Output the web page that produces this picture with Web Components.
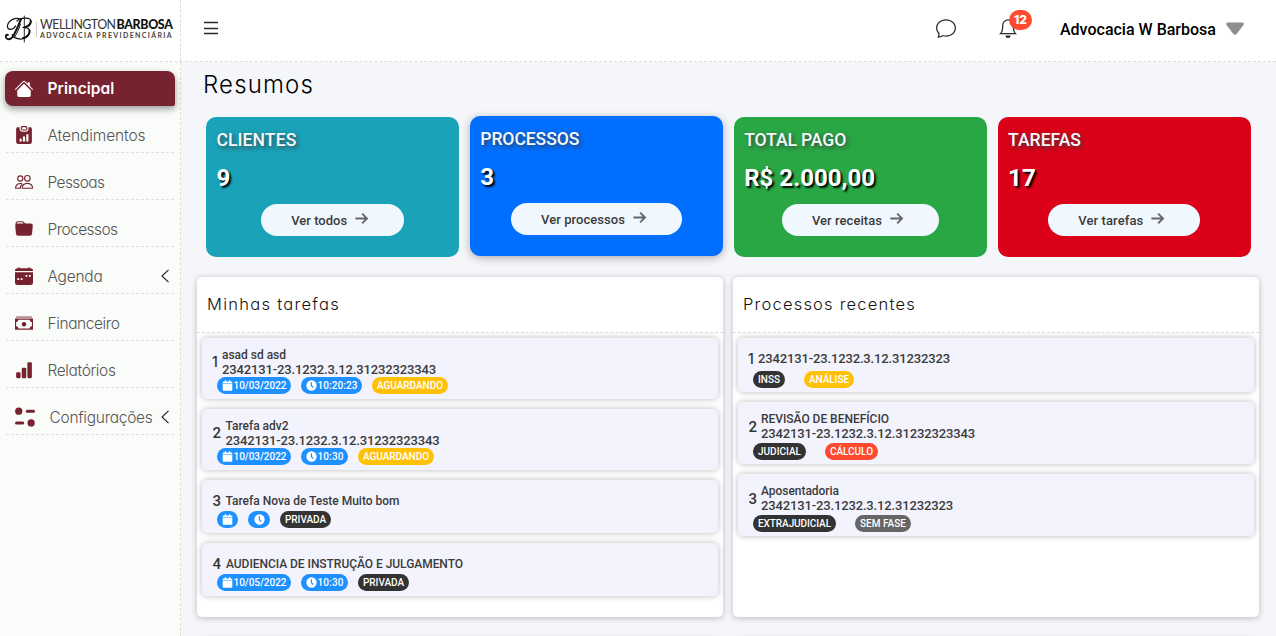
<!DOCTYPE html>
<html lang="pt-BR">
<head>
<meta charset="utf-8">
<title>Resumos</title>
<style>
html,body{margin:0;height:100%;overflow:hidden}
body{font-family:Roboto,"Liberation Sans",sans-serif;color:#000;background:#f4f6fa}
</style>
</head>
<body>
<app-shell></app-shell>
<script>
const GEO = 'Inter,"Open Sans",sans-serif';
const icons = {
  house:'<path d="M8 3.300l6 6V13.500A1.500 1.500 0 0 1 12.500 15h-9A1.500 1.500 0 0 1 2 13.500V9.300z"/><path d="M.4 8.300L7.300 1.400a1 1 0 0 1 1.400 0L15.600 8.300" fill="none" stroke="currentColor" stroke-width=".9" stroke-linecap="round"/><path d="M11.200 2h1.900v4l-1.900-1.900z"/>',
  clipdata:'<path fill-rule="evenodd" d="M6.500 0A1.500 1.500 0 0 0 5 1.500v1A1.500 1.500 0 0 0 6.500 4h3A1.500 1.500 0 0 0 11 2.500v-1A1.500 1.500 0 0 0 9.500 0zm0 1h3a.5.5 0 0 1 .5.5v1a.5.5 0 0 1-.5.5h-3a.5.5 0 0 1-.5-.5v-1a.5.5 0 0 1 .5-.5z"/><path fill-rule="evenodd" d="M4 1H3a2 2 0 0 0-2 2.500V14a2 2 0 0 0 2 2h10a2 2 0 0 0 2-2V3.500A2 2 0 0 0 13 1h-1v1.500A2.500 2.500 0 0 1 9.500 5h-3A2.500 2.500 0 0 1 4 2.500zM10 8a1 1 0 1 1 2 0v5a1 1 0 1 1-2 0zm-6 4a1 1 0 1 1 2 0v1a1 1 0 1 1-2 0zm4-3a1 1 0 0 1 1 1v3a1 1 0 1 1-2 0v-3a1 1 0 0 1 1-1z"/>',
  people:'<g fill="none" stroke="currentColor" stroke-width="1"><circle cx="11" cy="4.700" r="2.500"/><circle cx="4.700" cy="4.900" r="2.300"/><path d="M6.500 13.500c-.3-2.400 1.500-4.300 4.500-4.300s4.800 1.900 4.500 4.300z"/><path d="M6.600 9.500C3 8.700.5 10.500.5 13.500h4.200c0-1.700.7-2.900 1.900-3.800"/></g>',
  folder:'<path fill-rule="evenodd" d="M9.828 3h3.982a2 2 0 0 1 1.992 2.181l-.637 7A2 2 0 0 1 13.174 14H2.825a2 2 0 0 1-1.991-1.819l-.637-7a2 2 0 0 1 .342-1.310L.5 3a2 2 0 0 1 2-2h3.672a2 2 0 0 1 1.414.586l.828.828A2 2 0 0 0 9.828 3zm-8.322.120C1.720 3.042 1.950 3 2.190 3h5.396l-.707-.707A1 1 0 0 0 6.172 2H2.500a1 1 0 0 0-1 .981z"/>',
  calendar:'<path d="M4 .5a.5.5 0 0 0-1 0V1H2a2 2 0 0 0-2 2v.600h16V3a2 2 0 0 0-2-2h-1V.5a.5.5 0 0 0-1 0V1H4z"/><path fill-rule="evenodd" d="M0 4.600h16V14a2 2 0 0 1-2 2H2a2 2 0 0 1-2-2zm9.300 2.400v1.600H11V7zm3 0v1.600H14V7zM2 10v1.600h1.700V10zm3 0v1.600h1.700V10z"/>',
  cash:'<path d="M1 2.700h14" stroke="currentColor" stroke-width="1.200" opacity=".65"/><path fill-rule="evenodd" d="M0 4h16v10H0zM3 5.200a2 2 0 0 1-2 2v3.600a2 2 0 0 1 2 2h10a2 2 0 0 1 2-2V7.200a2 2 0 0 1-2-2z"/><circle cx="8" cy="9" r="2"/>',
  bars:'<rect x="1" y="10" width="4" height="5.300" rx="1"/><rect x="6" y="6" width="4" height="9.300" rx="1"/><rect x="11" y="1" width="4" height="14.300" rx="1"/>',
  left:'<path d="M11.500 1.800L5 8l6.500 6.200" fill="none" stroke="currentColor" stroke-width="1.150"/>',
  toggles:'<circle cx="3" cy="3.300" r="2.900"/><rect x="8.600" y="2.100" width="7.400" height="2.400" rx="1.200"/><circle cx="12.900" cy="12.700" r="2.900"/><rect x="0" y="11.500" width="7.400" height="2.400" rx="1.200"/>',
  menu:'<path d="M1 2.500h14M1 8.500h14M1 13.500h14" fill="none" stroke="currentColor" stroke-width="1.300"/>',
  chat:'<path d="M2.678 11.894a1 1 0 0 1 .287.801 10.970 10.970 0 0 1-.398 2c1.395-.323 2.247-.697 2.634-.893a1 1 0 0 1 .710-.074A8.060 8.060 0 0 0 8 14c3.996 0 7-2.807 7-6 0-3.192-3.004-6-7-6S1 4.808 1 8c0 1.468.617 2.830 1.678 3.894zm-.493 3.905a21.700 21.700 0 0 1-.713.129c-.2.032-.352-.176-.273-.362a9.700 9.700 0 0 0 .244-.637l.003-.010c.248-.720.450-1.548.524-2.319C.743 11.370 0 9.760 0 8c0-3.866 3.582-7 8-7s8 3.134 8 7-3.582 7-8 7a9.060 9.060 0 0 1-2.347-.306c-.520.263-1.639.742-3.468 1.105z"/>',
  bell:'<path d="M8 16a2 2 0 0 0 2-2H6a2 2 0 0 0 2 2z"/><path d="M8 1.400C5.300 1.900 3.800 3.700 3.800 6c0 2.800-.5 5.200-1.800 6.500h12c-1.300-1.300-1.800-3.700-1.800-6.500 0-2.300-1.500-4.100-4.200-4.600z" fill="none" stroke="currentColor" stroke-width="1"/>',
  caret:'<path d="M1.600 2.200h12.800c1.500 0 1.900 1.300 1 2.400L9.600 12.200c-.9 1.100-2.300 1.100-3.200 0L.6 4.600c-.9-1.100-.5-2.400 1-2.400z"/>',
  arrow:'<path d="M.5 8h14M8.800 2L14.800 8l-6 6" fill="none" stroke="currentColor" stroke-width="2.300"/>',
  day:'<path d="M1 5.400h14V14A1.800 1.800 0 0 1 13.200 15.800H2.800A1.800 1.800 0 0 1 1 14zM1 4.600V3.400A1.400 1.400 0 0 1 2.400 2H4V.3h2V2h4V.3h2V2h1.600A1.400 1.400 0 0 1 15 3.400v1.200z"/>',
  clock:'<path fill-rule="evenodd" d="M8 .5a7.500 7.500 0 1 0 0 15A7.500 7.500 0 0 0 8 .5zM7 3.300h1.700v4.500l2.400 2.600-1.200 1.200L7 8.600z"/>'
};
const esc = s => s.replace(/&/g,'&amp;').replace(/</g,'&lt;');
class Base extends HTMLElement{
  connectedCallback(){
    if(this.shadowRoot) return;
    this.attachShadow({mode:'open'}).innerHTML = this.view();
  }
  a(n){return this.getAttribute(n)||''}
}
class UiIcon extends Base{
  view(){const s=this.a('size')||16;
    return `<style>:host{display:block;flex:none;width:${s}px;height:${s}px}svg{display:block;overflow:visible}</style><svg width="${s}" height="${s}" viewBox="0 0 16 16" fill="currentColor">${icons[this.a('name')]}</svg>`}
}
class BrandLogo extends Base{
  view(){return `<style>
  :host{display:flex;align-items:center;height:28px;gap:3px;color:#111}
  .mark{flex:none;display:block}
  .words{border-left:1px solid #ccc;padding-left:3px;height:15px;display:flex;flex-direction:column;justify-content:center;font-family:Lato,sans-serif}
  .top{display:flex;font-size:12.400px;line-height:12px;color:#333;gap:1px}
  .top b{font-weight:900;color:#111}
  .sub{font-size:7px;line-height:8px;color:#444;font-weight:700}
  .top,.sub{flex:none}
  </style>
  <svg class="mark" width="28" height="28" viewBox="0 0 28 28" fill="none" stroke="currentColor" stroke-linecap="round">
  <path d="M16 4C13.500 10 11 17 7.500 22 5.500 25 2 25 1 22.500c-.6-1.700.5-3 1.800-2.600" stroke-width="2"/>
  <path d="M14 3.500C7 2.500 2 7.500 2.500 12c.5 3.500 6 3 8-1" stroke-width="1.200"/>
  <path d="M12 6c3-3 13.500-4.500 14 .2.300 3.500-4 6-8.500 6.300 5-.3 7.700 1.600 7.200 4.700-.8 5-7 7.800-12 6.500-3-.8-5-2.200-5.500-4.200" stroke-width="1.200"/>
  <path d="M25.700 6c.3 3-2.500 5.200-5.500 6.200M24.500 15.500c.6 3.500-2.800 6.800-6.500 7.800" stroke-width="2"/>
  <path d="M15.500 9C13.500 15 12 19 9.500 22" stroke-width="1"/>
  <path d="M19.300 1v26" stroke-width=".9"/></svg>
  <div class="words"><div class="top"><fit-text w="75.500">WELLINGTON</fit-text><b><fit-text w="56">BARBOSA</fit-text></b></div>
  <div class="sub"><fit-text w="133">ADVOCACIA PREVIDENCIÁRIA</fit-text></div></div>`}
}
class NavItem extends Base{
  view(){
    return `<style>:host{display:flex;box-sizing:border-box;height:35px;margin:0 1px 12px;padding:0 1px 0 9px;align-items:center;border-bottom:1px dashed #dfdfdf;color:#77222f;font:300 15.500px ${GEO};font-feature-settings:"cv11"}
    :host([active]){margin:0 0 12px;padding:0 10px;background:#77222f;color:#fff;border:0;border-radius:8px 8px 2px 8px;box-shadow:0 3px 7px rgba(0,0,0,.4);font-weight:600}
    .l{flex:1;margin-left:14.500px;color:#555;padding-top:1px}
    :host([active]) .l{color:#fff;padding:0}
    .c{color:#222}</style>
    <ui-icon name="${this.a('icon')}" size="${this.a('isize')||18}"></ui-icon><div class="l"><fit-text w="${this.a('w')}">${esc(this.a('label'))}</fit-text></div>${this.hasAttribute('sub')?'<ui-icon class="c" name="left" size="16"></ui-icon>':''}`}
}
class SideBar extends Base{
  view(){return `<style>:host{display:block;box-sizing:border-box;background:#fafcf9;border-right:1px dashed #dcdcdc;padding:9px 5px 0}</style><slot></slot>`}
}
class TopBar extends Base{
  view(){return `<style>:host{display:flex;box-sizing:border-box;height:62px;background:#fff;border-bottom:1px dashed #dcdcdc}
  .brand{box-sizing:border-box;width:181px;border-right:1px dashed #dcdcdc;padding:15px 0 0 5px}
  .bar{flex:1;display:flex;align-items:center;padding:0 32px 5px 22px;color:#222b35}
  .sp{flex:1}.bell{position:relative;margin:0 42px 0 42px}
  .n{position:absolute;left:11px;top:-8px;box-sizing:border-box;width:23px;height:20px;border-radius:10px;background:#ff4a2f;color:#fff;font:800 12px/20px ${GEO};display:flex;justify-content:center}
  .user{font:500 16px/20px Roboto,sans-serif;color:#000;margin-right:10px;padding-top:3px}
  .car{color:#8e8e8e;padding-top:1px}</style>
  <div class="brand"><brand-logo></brand-logo></div>
  <div class="bar"><ui-icon name="menu" size="16"></ui-icon><div class="sp"></div><ui-icon name="chat" size="20"></ui-icon>
  <div class="bell"><ui-icon name="bell" size="20"></ui-icon><div class="n"><fit-text w="13">12</fit-text></div></div>
  <div class="user"><fit-text w="156">Advocacia W Barbosa</fit-text></div><ui-icon class="car" name="caret" size="18"></ui-icon></div>`}
}
class SummaryCard extends Base{
  view(){return `<style>:host{display:block;box-sizing:border-box;height:140px;border-radius:10px;background:${this.a('color')};padding:12px 10.400px 0;color:#fff}
  :host([raised]){transform:translateY(-1px);box-shadow:0 2px 8px rgba(0,0,0,.3)}
  .t{font:500 17.600px/23px Roboto,sans-serif;color:#f3f8fa;text-shadow:2px 2px 4px rgba(60,60,60,.9)}
  .v{font:700 24px/28px Roboto,sans-serif;margin-top:12px;text-shadow:2px 2px 2px #000}
  .b{display:flex;align-items:center;box-sizing:border-box;width:${this.a('bw')}px;height:32px;border-radius:16px;background:#f0f7ff;margin:12px auto 0;padding:1px 0 0 30px;font:500 13px/16px Roboto,sans-serif;color:#3c3c3c;gap:8px}
  ui-icon{color:#666;margin-bottom:4px}</style>
  <div class="t"><fit-text w="${this.a('tw')}">${this.a('title')}</fit-text></div><div class="v"><fit-text w="${this.a('vw')}">${this.a('value')}</fit-text></div>
  <div class="b"><fit-text w="${this.a('lw')}">${this.a('link')}</fit-text><ui-icon name="arrow" size="13"></ui-icon></div>`}
}
class DataPanel extends Base{
  view(){return `<style>:host{display:block;box-sizing:border-box;height:340px;background:#fff;border-radius:5px;box-shadow:0 1px 6px rgba(0,0,0,.24)}
  .h{box-sizing:border-box;height:56px;border-bottom:1px dashed #dcdcdc;padding:0 10px 2px;display:flex;align-items:center;font:300 16.500px/20px ${GEO};font-feature-settings:"cv11";color:#111}
  .c{padding:5px 5px 0;display:grid;gap:10px}</style><div class="h"><fit-text w="${this.a('w')}">${this.a('title')}</fit-text></div><div class="c"><slot></slot></div>`}
}
class PillBadge extends Base{
  view(){const c={blue:'#1e90ff',amber:'#ffc107',dark:'#333',red:'#ff4a2f',gray:'#666'}[this.a('tone')];
  return `<style>:host{display:flex;box-sizing:border-box;width:${this.a('w')}px;height:17px;border-radius:9px;background:${c};color:#fff;align-items:center;justify-content:center;gap:1px;font:500 10px/17px Roboto,sans-serif}ui-icon{margin-bottom:1px}</style>${this.a('icon')?`<ui-icon name="${this.a('icon')}" size="11"></ui-icon>`:''}${this.a('text')?`<fit-text w="${this.a('w')-(this.a('icon')?21:10)}">${this.a('text')}</fit-text>`:''}`}
}
class RecordRow extends Base{
  view(){return `<style>:host{display:block;box-sizing:border-box;height:${this.a('h')}px;border-radius:5px;background:#f3f3fe;box-shadow:0 0 6px rgba(0,0,0,.28);padding-left:10.500px;color:#3b3b3b}
  .top{display:flex;align-items:center;box-sizing:border-box;height:${this.a('head')}px;padding-top:${this.a('pt')}px}
  .n{font:500 15px/16px Roboto,sans-serif;width:${this.a('nw')}px;flex:none;color:#333;padding-top:1px}
  .n.one{font:500 14px/16px ${GEO};text-indent:-.5px;padding:0}
  .x{font:500 12px/14px Roboto,sans-serif}.x .k{font-size:13px}.x div+.k{padding-top:1px;margin-bottom:-1px}
  .b{display:flex;gap:${this.a('gap')}px;padding-left:4.500px}</style>
  <div class="top"><div class="n${this.a('n')==='1'?' one':''}">${this.a('n')}</div><div class="x">${this.a('l1')?`<div><fit-text w="${this.a('w1')}">${this.a('l1')}</fit-text></div>`:''}${this.a('l2')?`<div class="k"><fit-text w="${this.a('w2')}">${this.a('l2')}</fit-text></div>`:''}</div></div><div class="b"><slot></slot></div>`}
}
class AppShell extends Base{
  view(){
  const C='2342131-23.1232.3.12.31232323';
  return `<style>:host{display:grid;grid-template:62px 574px/181px 1fr;height:636px;overflow:hidden}
  top-bar{grid-column:1/3}
  main{padding:8px 17px 0 16px;min-width:0;overflow:hidden}
  h1{box-sizing:border-box;margin:0 6px;font:300 24px/30px ${GEO};color:#000;height:47px;font-feature-settings:"cv11"}
  .cards{display:grid;grid-template-columns:repeat(4,1fr);gap:10.500px;margin:0 8px 20px 9px}
  .panels{display:grid;grid-template-columns:1fr 1fr;gap:10px;row-gap:22px}</style>
  <top-bar></top-bar>
  <side-bar>
  <nav-item active icon="house" label="Principal" w="67"></nav-item>
  <nav-item icon="clipdata" label="Atendimentos" w="98"></nav-item>
  <nav-item icon="people" label="Pessoas" w="57"></nav-item>
  <nav-item icon="folder" label="Processos" w="70"></nav-item>
  <nav-item sub icon="calendar" label="Agenda" w="55"></nav-item>
  <nav-item icon="cash" label="Financeiro" w="72"></nav-item>
  <nav-item icon="bars" label="Relatórios" w="68"></nav-item>
  <nav-item sub icon="toggles" isize="20" label="Configurações" w="103"></nav-item>
  </side-bar>
  <main><h1><fit-text w="111">Resumos</fit-text></h1>
  <div class="cards">
  <summary-card color="#19a2b8" title="CLIENTES" tw="80" value="9" vw="14" link="Ver todos" lw="56" bw="143"></summary-card>
  <summary-card raised color="#006fff" title="PROCESSOS" tw="99" value="3" vw="14" link="Ver processos" lw="84" bw="171"></summary-card>
  <summary-card color="#29a745" title="TOTAL PAGO" tw="102" value="R$ 2.000,00" vw="131" link="Ver receitas" lw="70" bw="157"></summary-card>
  <summary-card color="#da0118" title="TAREFAS" tw="73" value="17" vw="28" link="Ver tarefas" lw="65" bw="152"></summary-card>
  </div>
  <div class="panels">
  <data-panel title="Minhas tarefas" w="133">
  <record-row n="1" nw="9.500" h="61" head="39" pt="8" gap="10" l1="asad sd asd" w1="64" l2="${C}343" w2="214"><pill-badge tone="blue" icon="day" text="10/03/2022" w="74"></pill-badge><pill-badge tone="blue" icon="clock" text="10:20:23" w="61"></pill-badge><pill-badge tone="amber" text="AGUARDANDO" w="76"></pill-badge></record-row>
  <record-row n="2" nw="13" h="61" head="39" pt="8" gap="10" l1="Tarefa adv2" w1="63" l2="${C}343" w2="214"><pill-badge tone="blue" icon="day" text="10/03/2022" w="74"></pill-badge><pill-badge tone="blue" icon="clock" text="10:30" w="47"></pill-badge><pill-badge tone="amber" text="AGUARDANDO" w="76"></pill-badge></record-row>
  <record-row n="3" nw="13" h="53" head="31" pt="10" gap="10" l1="Tarefa Nova de Teste Muito bom" w1="174"><pill-badge tone="blue" icon="day" w="21"></pill-badge><pill-badge tone="blue" icon="clock" w="22"></pill-badge><pill-badge tone="dark" text="PRIVADA" w="51"></pill-badge></record-row>
  <record-row n="4" nw="13.500" h="53" head="31" pt="10" gap="10" l1="AUDIENCIA DE INSTRUÇÃO E JULGAMENTO" w1="237"><pill-badge tone="blue" icon="day" text="10/05/2022" w="74"></pill-badge><pill-badge tone="blue" icon="clock" text="10:30" w="47"></pill-badge><pill-badge tone="dark" text="PRIVADA" w="51"></pill-badge></record-row>
  </data-panel>
  <data-panel title="Processos recentes" w="173">
  <record-row n="1" nw="9.500" h="54" head="33" pt="8" gap="19" l2="${C}" w2="192"><pill-badge tone="dark" text="INSS" w="32"></pill-badge><pill-badge tone="amber" text="ANÁLISE" w="50"></pill-badge></record-row>
  <record-row n="2" nw="12.500" h="62" head="41" pt="7" gap="19" l1="REVISÃO DE BENEFÍCIO" w1="128" l2="${C}343" w2="214"><pill-badge tone="dark" text="JUDICIAL" w="53"></pill-badge><pill-badge tone="red" text="CÁLCULO" w="53"></pill-badge></record-row>
  <record-row n="3" nw="12.500" h="62" head="41" pt="7" gap="19" l1="Aposentadoria" w1="78" l2="${C}" w2="192"><pill-badge tone="dark" text="EXTRAJUDICIAL" w="83"></pill-badge><pill-badge tone="gray" text="SEM FASE" w="56"></pill-badge></record-row>
  </data-panel>
  <data-panel></data-panel><data-panel></data-panel>
  </div></main>`}
}
/* Spreads its text over the width given by the w attribute. */
class FitText extends Base{
  view(){return `<style>:host{display:inline-block;white-space:pre;vertical-align:top}</style><slot></slot>`}
  connectedCallback(){
    super.connectedCallback();
    const w=+this.a('w'), n=this.textContent.length;
    if(w&&n){
      this.style.letterSpacing='0px';
      this.style.letterSpacing=((w-this.getBoundingClientRect().width)/n).toFixed(3)+'px';
    }
  }
}
customElements.define('ui-icon',UiIcon);
customElements.define('brand-logo',BrandLogo);
customElements.define('nav-item',NavItem);
customElements.define('side-bar',SideBar);
customElements.define('top-bar',TopBar);
customElements.define('summary-card',SummaryCard);
customElements.define('pill-badge',PillBadge);
customElements.define('record-row',RecordRow);
customElements.define('data-panel',DataPanel);
customElements.define('app-shell',AppShell);
customElements.define('fit-text',FitText);
</script>
</body>
</html>
